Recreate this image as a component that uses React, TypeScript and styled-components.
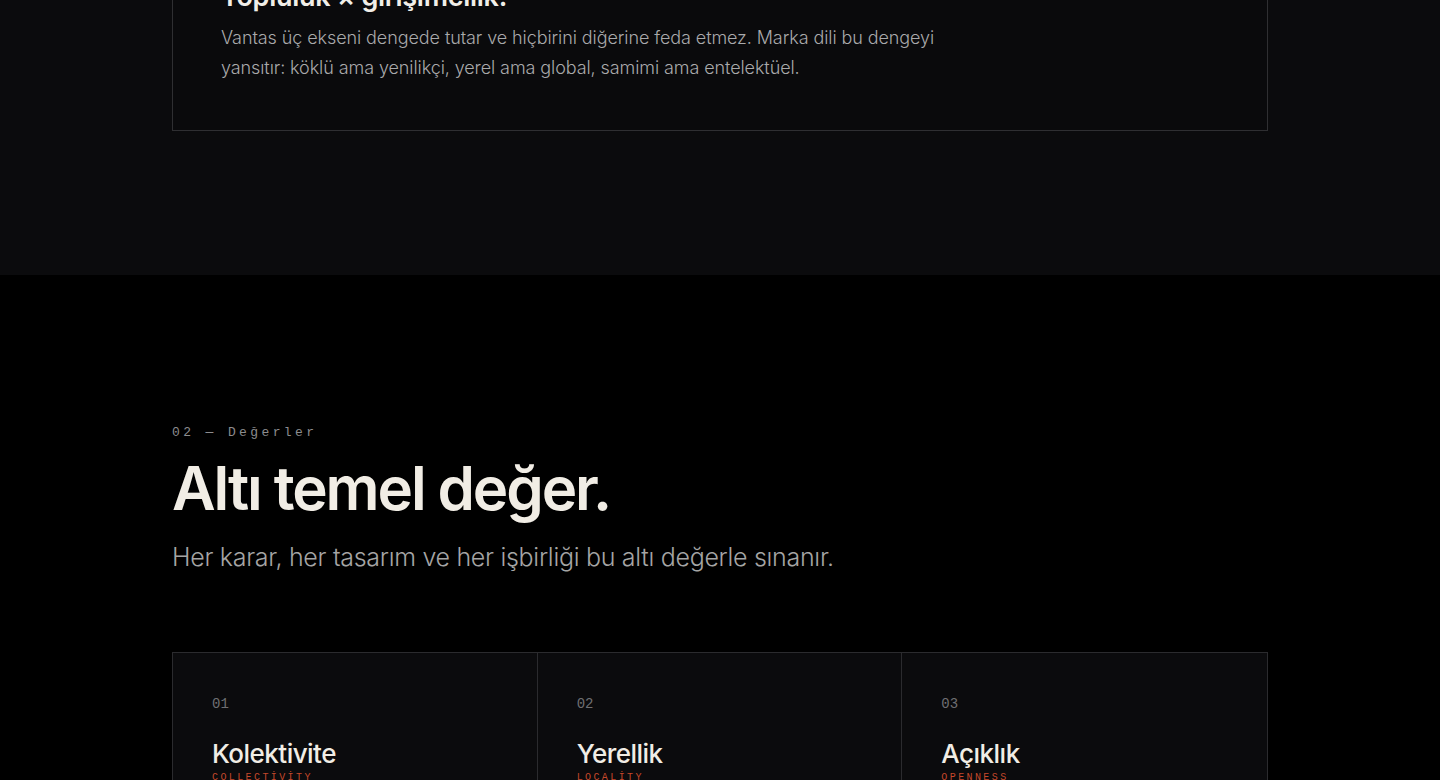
import React from 'react';
import styled, { createGlobalStyle } from 'styled-components';

const GlobalStyle = createGlobalStyle`
  html, body {
    margin: 0;
    padding: 0;
    background: #000;
  }
  body {
    font-family: 'Inter', 'Noto Sans', sans-serif;
    -webkit-font-smoothing: antialiased;
  }
`;

const Page = styled.div`
  width: 100%;
  overflow: hidden;
`;

const Container = styled.div`
  width: 1096px;
  margin: 0 auto;
`;

const ManifestoSection = styled.section`
  background: #0b0b0d;
  padding-bottom: 144px;
`;

const ManifestoCard = styled.article`
  margin-top: -69px;
  border: 1px solid #2f2f32;
  background: #0a0a0c;
  padding: 48px 48px 47px;
`;

const CardHeading = styled.h3`
  margin: 0 0 9px;
  font-size: 27px;
  line-height: 34px;
  font-weight: 600;
  letter-spacing: -0.01em;
  color: #f1eee8;
`;

const CardText = styled.p`
  margin: 0;
  max-width: 740px;
  font-size: 18px;
  line-height: 30px;
  font-weight: 300;
  letter-spacing: -0.005em;
  color: #a9a9ab;
`;

const ValuesSection = styled.section`
  background: #000;
  padding-top: 150px;
`;

const Eyebrow = styled.div`
  font-family: 'Liberation Mono', 'DejaVu Sans Mono', monospace;
  font-size: 13px;
  line-height: 16px;
  letter-spacing: 0.26em;
  color: #8c8c8e;
`;

const Title = styled.h2`
  margin: 11px 0 0;
  font-size: 60px;
  line-height: 72px;
  font-weight: 600;
  letter-spacing: -0.035em;
  color: #f1ede5;
`;

const Lead = styled.p`
  margin: 17px 0 0;
  font-size: 25px;
  line-height: 32px;
  font-weight: 300;
  letter-spacing: -0.012em;
  color: #a5a5a5;
`;

const ValueGrid = styled.div`
  margin-top: 79px;
  display: grid;
  grid-template-columns: repeat(3, 1fr);
  border: 1px solid #2b2b2e;
  background: #0b0b0d;
`;

const ValueCard = styled.div<{ $last?: boolean }>`
  padding: 42px 39px 48px;
  border-right: ${({ $last }) => ($last ? 'none' : '1px solid #2b2b2e')};
  min-height: 200px;
`;

const ValueIndex = styled.div`
  font-family: 'Liberation Mono', 'DejaVu Sans Mono', monospace;
  font-size: 14px;
  line-height: 18px;
  color: #6f6f72;
`;

const ValueName = styled.h4`
  margin: 25px 0 0;
  font-size: 26px;
  line-height: 32px;
  font-weight: 500;
  letter-spacing: -0.02em;
  color: #f1ede5;
`;

const ValueLatin = styled.div`
  margin-top: 2px;
  font-family: 'Liberation Mono', 'DejaVu Sans Mono', monospace;
  font-size: 10px;
  line-height: 12px;
  letter-spacing: 0.24em;
  color: #c4482b;
`;

const values = [
  { index: '01', name: 'Kolektivite', latin: 'COLLECTİVİTY' },
  { index: '02', name: 'Yerellik', latin: 'LOCALİTY' },
  { index: '03', name: 'Açıklık', latin: 'OPENNESS' },
];

export default function App() {
  return (
    <Page>
      <GlobalStyle />
      <ManifestoSection>
        <Container>
          <ManifestoCard>
            <CardHeading>Topluluk × girişimcilik.</CardHeading>
            <CardText>
              Vantas üç ekseni dengede tutar ve hiçbirini diğerine feda etmez. Marka dili bu dengeyi
              yansıtır: köklü ama yenilikçi, yerel ama global, samimi ama entelektüel.
            </CardText>
          </ManifestoCard>
        </Container>
      </ManifestoSection>

      <ValuesSection>
        <Container>
          <Eyebrow>02 — Değerler</Eyebrow>
          <Title>Altı temel değer.</Title>
          <Lead>Her karar, her tasarım ve her işbirliği bu altı değerle sınanır.</Lead>
          <ValueGrid>
            {values.map((v, i) => (
              <ValueCard key={v.index} $last={i === values.length - 1}>
                <ValueIndex>{v.index}</ValueIndex>
                <ValueName>{v.name}</ValueName>
                <ValueLatin>{v.latin}</ValueLatin>
              </ValueCard>
            ))}
          </ValueGrid>
        </Container>
      </ValuesSection>
    </Page>
  );
}
